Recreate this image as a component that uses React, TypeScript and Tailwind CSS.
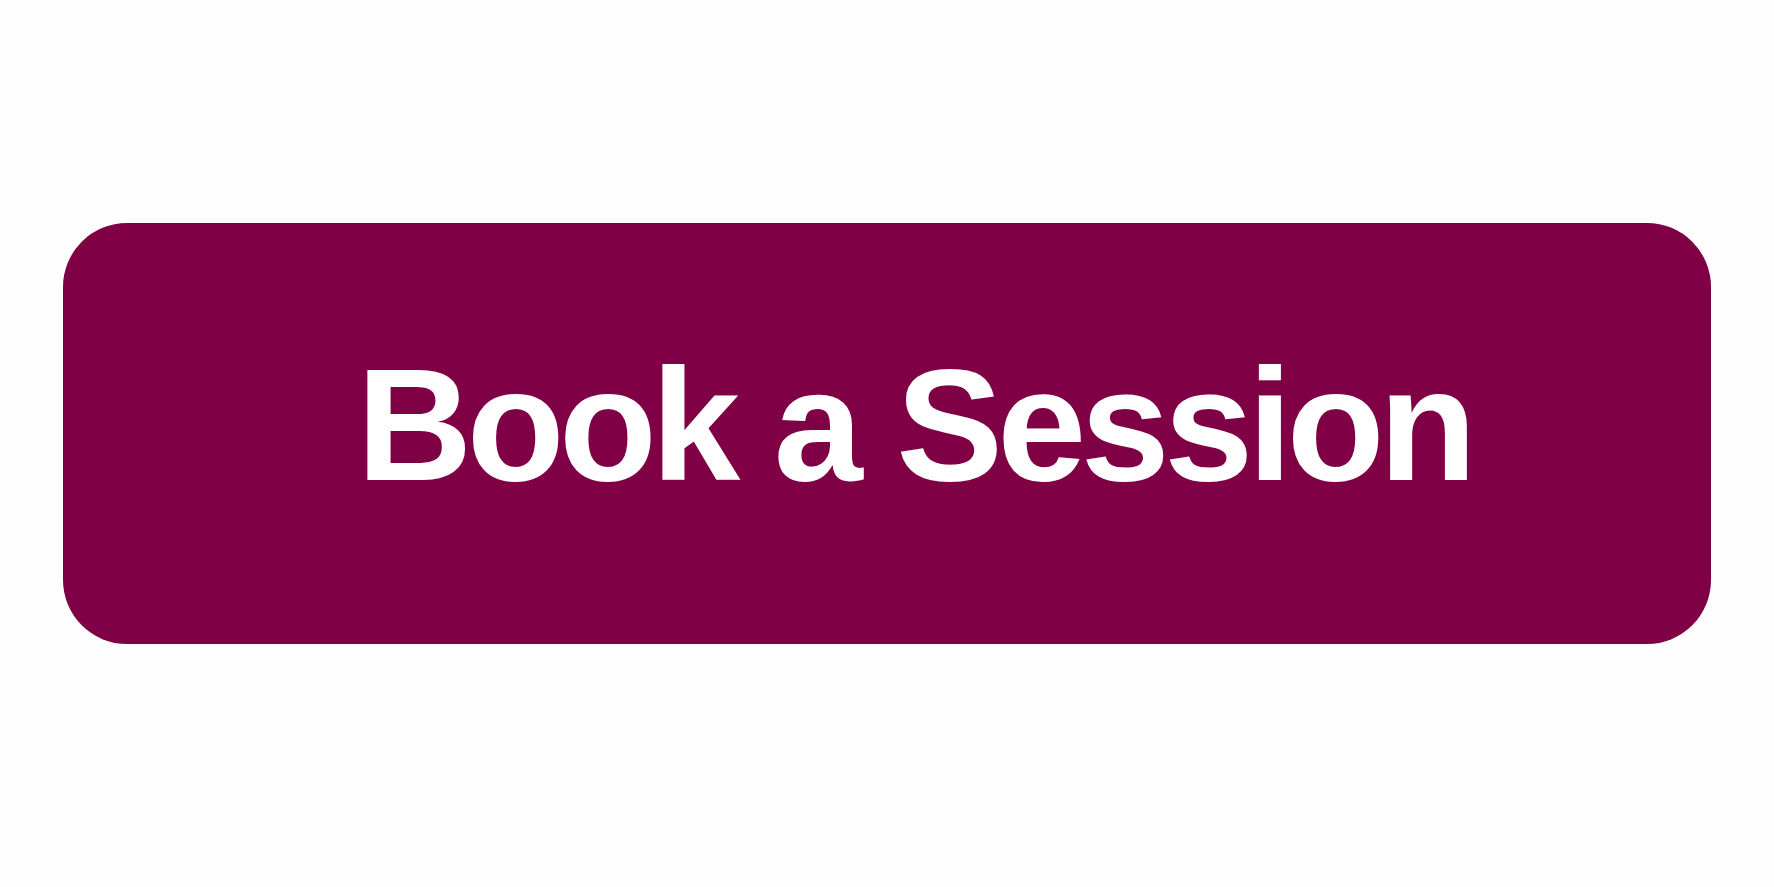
export default function App() {
  return (
    <div className="w-[1774px] h-[887px] bg-[#fefefe] pt-[223px] px-[63px]">
      <div className="w-full h-[421px] rounded-[64px] bg-[#800046] flex items-center justify-center pl-[54px] pb-[18px]">
        <span
          className="text-white font-bold text-[160px] leading-none tracking-[-5.5px] whitespace-nowrap"
          style={{ fontFamily: '"Liberation Sans", Arial, sans-serif' }}
        >
          Book a Session
        </span>
      </div>
    </div>
  );
}
